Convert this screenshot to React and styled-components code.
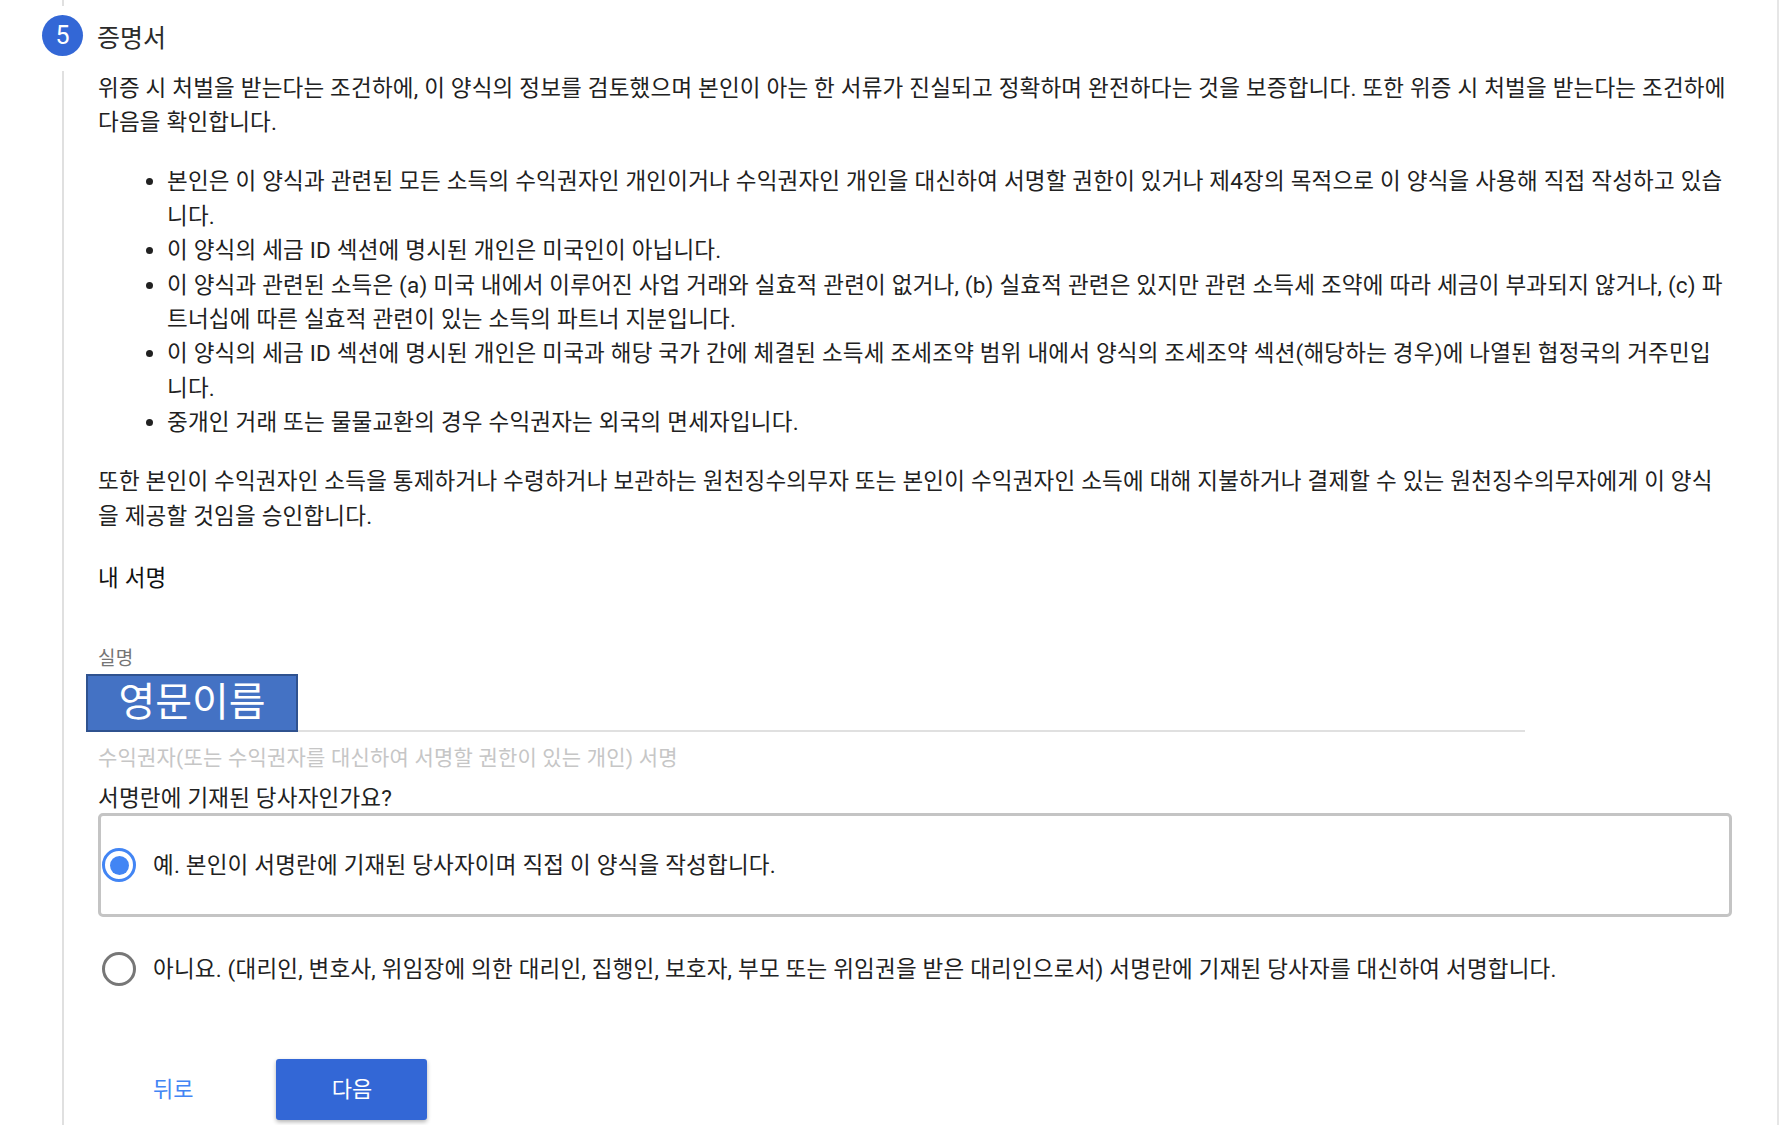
import React from "react";
import styled, { createGlobalStyle } from "styled-components";

const GlobalStyle = createGlobalStyle`
  html, body {
    margin: 0;
    padding: 0;
    background: #fff;
    overflow: hidden;
  }
  body {
    font-family: Roboto, "Noto Sans CJK KR", sans-serif;
    color: #212121;
  }
`;

const Page = styled.div`
  width: 1779px;
  height: 1125px;
  box-sizing: border-box;
  border-right: 2px solid #e6e6e6;
  overflow: hidden;
`;

const Step = styled.section`
  display: flex;
  flex-direction: column;
  height: 100%;
  padding-left: 42px;
`;

const Connector = styled.div`
  height: 6px;
  margin-left: 20px;
  border-left: 2px solid #e0e0e0;
`;

const StepHeader = styled.div`
  display: flex;
  align-items: center;
  gap: 14px;
  margin-top: 9px;
`;

const StepBadge = styled.div`
  width: 41px;
  height: 41px;
  border-radius: 50%;
  background: #3367d6;
  color: #fff;
  font-family: Roboto, sans-serif;
  font-size: 25px;
  display: flex;
  align-items: center;
  justify-content: center;
`;

const StepTitle = styled.h2`
  margin: 0;
  font-size: 25px;
  font-weight: 400;
  color: #2b2b2b;
`;

const StepBody = styled.div`
  flex: 1;
  margin: 15px 0 0 20px;
  padding-left: 34px;
  border-left: 2px solid #e0e0e0;
`;

const Content = styled.div`
  width: 1630px;
  font-size: 22.5px;
  line-height: 34.4px;
  letter-spacing: 0.2px;
`;

const Paragraph = styled.p`
  margin: 0;
`;

const BulletList = styled.ul`
  margin: 24.6px 0;
  padding-left: 69px;
  list-style: disc;
`;

const SectionLabel = styled.h3`
  margin: 28px 0 0;
  font-size: 22.5px;
  font-weight: 400;
  line-height: 34.4px;
  color: #111;
`;

const FieldLabel = styled.div`
  margin-top: 52px;
  font-size: 19px;
  line-height: 24px;
  color: #757575;
`;

const Field = styled.div`
  display: flex;
  align-items: flex-end;
  width: 1427px;
  height: 57px;
  margin-top: 2px;
  border-bottom: 2px solid #e0e0e0;
`;

const NameStamp = styled.div`
  width: 212px;
  height: 58px;
  margin: 0 0 -2px -12px;
  box-sizing: border-box;
  background: #4472c4;
  border: 2px solid #2f528f;
  color: #fff;
  font-size: 40px;
  letter-spacing: 0;
  display: flex;
  align-items: center;
  justify-content: center;
`;

const Hint = styled.div`
  margin-top: 14px;
  font-size: 21px;
  line-height: 24px;
  color: #c6c6c6;
`;

const Question = styled.div`
  margin-top: 13px;
  line-height: 30px;
`;

const Option = styled.label`
  display: flex;
  align-items: center;
  gap: 17px;
  width: calc(100% + 4px);
  height: 104px;
  box-sizing: border-box;
  padding-left: 1px;
  border: 3px solid ${(p) => (p.selected ? "#c4c4c4" : "transparent")};
  border-radius: 5px;
  cursor: pointer;
`;

const Radio = styled.span`
  position: relative;
  flex: none;
  width: 34px;
  height: 34px;
  box-sizing: border-box;
  border-radius: 50%;
  border: 3px solid ${(p) => (p.checked ? "#4285f4" : "#777")};

  &::after {
    content: "";
    position: absolute;
    top: 4.5px;
    left: 4.5px;
    width: 19px;
    height: 19px;
    border-radius: 50%;
    background: #4285f4;
    display: ${(p) => (p.checked ? "block" : "none")};
  }
`;

const Actions = styled.div`
  display: flex;
  align-items: center;
  gap: 59px;
  margin-top: 38px;
  letter-spacing: 0;
`;

const BackButton = styled.button`
  margin-left: 31px;
  padding: 0 24px;
  height: 61px;
  border: none;
  background: none;
  color: #4285f4;
  font: inherit;
  font-size: 22px;
  cursor: pointer;
`;

const NextButton = styled.button`
  width: 151px;
  height: 61px;
  border: none;
  border-radius: 3px;
  background: #3367d6;
  color: #fff;
  font: inherit;
  font-size: 22px;
  box-shadow: 0 2px 4px rgba(0, 0, 0, 0.3);
  cursor: pointer;
`;

const bullets = [
  "본인은 이 양식과 관련된 모든 소득의 수익권자인 개인이거나 수익권자인 개인을 대신하여 서명할 권한이 있거나 제4장의 목적으로 이 양식을 사용해 직접 작성하고 있습니다.",
  "이 양식의 세금 ID 섹션에 명시된 개인은 미국인이 아닙니다.",
  "이 양식과 관련된 소득은 (a) 미국 내에서 이루어진 사업 거래와 실효적 관련이 없거나, (b) 실효적 관련은 있지만 관련 소득세 조약에 따라 세금이 부과되지 않거나, (c) 파트너십에 따른 실효적 관련이 있는 소득의 파트너 지분입니다.",
  "이 양식의 세금 ID 섹션에 명시된 개인은 미국과 해당 국가 간에 체결된 소득세 조세조약 범위 내에서 양식의 조세조약 섹션(해당하는 경우)에 나열된 협정국의 거주민입니다.",
  "중개인 거래 또는 물물교환의 경우 수익권자는 외국의 면세자입니다.",
];

const options = [
  { id: "self", text: "예. 본인이 서명란에 기재된 당사자이며 직접 이 양식을 작성합니다." },
  {
    id: "agent",
    text: "아니요. (대리인, 변호사, 위임장에 의한 대리인, 집행인, 보호자, 부모 또는 위임권을 받은 대리인으로서) 서명란에 기재된 당사자를 대신하여 서명합니다.",
  },
];

export default function App() {
  const [choice, setChoice] = React.useState("self");

  return (
    <>
      <GlobalStyle />
      <Page>
        <Step>
          <Connector />
          <StepHeader>
            <StepBadge>5</StepBadge>
            <StepTitle>증명서</StepTitle>
          </StepHeader>
          <StepBody>
            <Content>
              <Paragraph>
                위증 시 처벌을 받는다는 조건하에, 이 양식의 정보를 검토했으며 본인이 아는 한 서류가 진실되고 정확하며 완전하다는 것을 보증합니다. 또한 위증 시 처벌을 받는다는 조건하에 다음을 확인합니다.
              </Paragraph>
              <BulletList>
                {bullets.map((b) => (
                  <li key={b}>{b}</li>
                ))}
              </BulletList>
              <Paragraph>
                또한 본인이 수익권자인 소득을 통제하거나 수령하거나 보관하는 원천징수의무자 또는 본인이 수익권자인 소득에 대해 지불하거나 결제할 수 있는 원천징수의무자에게 이 양식을 제공할 것임을 승인합니다.
              </Paragraph>

              <SectionLabel>내 서명</SectionLabel>
              <FieldLabel>실명</FieldLabel>
              <Field>
                <NameStamp>영문이름</NameStamp>
              </Field>
              <Hint>수익권자(또는 수익권자를 대신하여 서명할 권한이 있는 개인) 서명</Hint>

              <Question>서명란에 기재된 당사자인가요?</Question>
              {options.map((o) => (
                <Option key={o.id} selected={choice === o.id} onClick={() => setChoice(o.id)}>
                  <Radio checked={choice === o.id} />
                  <span>{o.text}</span>
                </Option>
              ))}

              <Actions>
                <BackButton>뒤로</BackButton>
                <NextButton>다음</NextButton>
              </Actions>
            </Content>
          </StepBody>
        </Step>
      </Page>
    </>
  );
}
